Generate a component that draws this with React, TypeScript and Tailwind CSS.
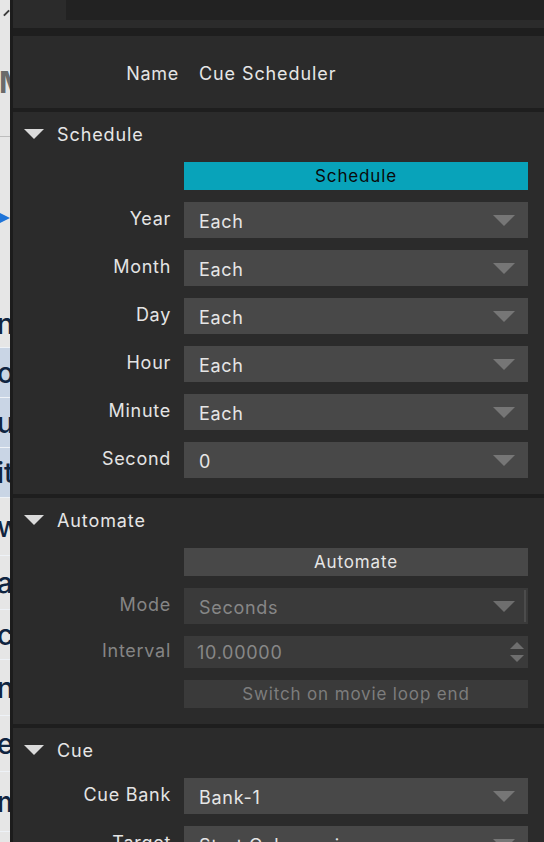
import React from 'react';

// Down-pointing triangle used for dropdown arrows and section toggles
function Tri({ className }: { className: string }) {
    return (
        <svg viewBox="0 0 22 11" className={className}>
            <path d="M0 0 H22 L11 11 Z" fill="currentColor" />
        </svg>
    );
}

function Select({ value, disabled }: { value: string; disabled?: boolean }) {
    return (
        <div className={`h-[36px] flex items-center justify-between pl-[15px] pr-[13px] ${disabled ? 'bg-[#3a3a3a] text-[#878787]' : 'bg-[#484848] text-[#e6e6e6]'}`}>
            <span className="text-[18px] tracking-[0.04em] leading-none pt-[3px]">{value}</span>
            <div className="flex items-center h-full">
                <Tri className={`w-[22px] h-[11px] ${disabled ? 'text-[#6e6e6e]' : 'text-[#767676]'}`} />
                {disabled && <div className="w-[2px] h-[32px] bg-[#4c4c4c] ml-[9px] -mr-[11px]" />}
            </div>
        </div>
    );
}

function Row({ label, children, disabled }: { label: string; children: React.ReactNode; disabled?: boolean }) {
    return (
        <div className="flex items-center">
            <div className={`w-[158px] shrink-0 text-right text-[18px] tracking-[0.04em] leading-none pb-[3px] ${disabled ? 'text-[#858585]' : 'text-[#e4e4e4]'}`}>{label}</div>
            <div className="flex-1 ml-[13px]">{children}</div>
        </div>
    );
}

function SectionHeader({ title }: { title: string }) {
    return (
        <div className="h-[44px] flex items-center pl-[11px]">
            <Tri className="w-[20px] h-[10px] text-[#dadada]" />
            <span className="ml-[13px] text-[18px] tracking-[0.05em] text-[#e6e6e6] leading-none pt-[2px]">{title}</span>
        </div>
    );
}

// Part of the document window that peeks out behind the panel
function BackdropStrip() {
    const letters = [
        { t: 'nc', h: 48, bg: 'bg-[#e6e6e6]' },
        { t: 'o', h: 50, bg: 'bg-[#c9d5e5]' },
        { t: 'u', h: 50, bg: 'bg-[#c9d5e5]' },
        { t: 'it', h: 50, bg: 'bg-[#c9d5e5]' },
        { t: 'w', h: 58, bg: 'bg-[#e6e6e6]' },
        { t: 'a', h: 54, bg: 'bg-[#e6e6e6]' },
        { t: 'ch', h: 50, bg: 'bg-[#e6e6e6]' },
        { t: 'nt', h: 56, bg: 'bg-[#e6e6e6]' },
        { t: 'e', h: 56, bg: 'bg-[#e6e6e6]' },
        { t: 'm', h: 60, bg: 'bg-[#e6e6e6]' },
    ];
    return (
        <div className="w-[10px] shrink-0 overflow-hidden bg-[#e6e6e6] flex flex-col">
            <div className="h-[28px] flex items-center pl-[3px] pb-[2px]">
                <svg viewBox="0 0 8 8" className="w-[8px] h-[8px]">
                    <path d="M1 7 L7 1" stroke="#3a3a3a" strokeWidth="2.2" />
                </svg>
            </div>
            <div className="h-[108px] flex items-center">
                <span className="text-[30px] font-bold text-[#6a6a6a] leading-none -ml-[1px]">M</span>
            </div>
            <div className="h-px bg-[#bdbdbd]" />
            <div className="h-[86px] flex items-end">
                <svg viewBox="0 0 10 10" className="w-[10px] h-[10px]">
                    <path d="M0 0 L10 5 L0 10 Z" fill="#1f74d8" />
                </svg>
            </div>
            <div className="h-[77px]" />
            {letters.map((l, i) => (
                <div key={i} className={`shrink-0 flex items-center border-b border-[#eef2f7] ${l.bg}`} style={{ height: l.h }}>
                    <span className="text-[28px] font-medium text-[#0f2440] leading-none -ml-[3px]">{l.t}</span>
                </div>
            ))}
        </div>
    );
}

export default function App() {
    return (
        <div className="flex w-[544px] h-[842px] overflow-hidden font-['Inter','Liberation_Sans',sans-serif]">
            <BackdropStrip />
            <div className="w-[3px] shrink-0 bg-[#1c1c1c]" />

            <div className="flex-1 flex flex-col bg-[#1e1e1e] gap-[4px] overflow-hidden">
                {/* Top bar */}
                <div className="shrink-0 flex flex-col">
                    <div className="h-[28px] bg-[#2b2b2b] flex">
                        <div className="w-[53px]" />
                        <div className="flex-1 h-[20px] bg-[#222222]" />
                    </div>
                    <div className="h-[4px]" />
                </div>

                {/* Name */}
                <div className="h-[72px] shrink-0 bg-[#2b2b2b] flex items-center pt-[3px]">
                    <div className="w-[166px] text-right text-[18px] tracking-[0.04em] text-[#e4e4e4] leading-none">Name</div>
                    <div className="ml-[20px] text-[18px] tracking-[0.05em] text-[#e6e6e6] leading-none">Cue Scheduler</div>
                </div>

                {/* Schedule */}
                <div className="shrink-0 bg-[#2b2b2b] pb-[16px] pr-[16px]">
                    <SectionHeader title="Schedule" />
                    <div className="mt-[6px] flex flex-col gap-[12px]">
                        <Row label="">
                            <div className="h-[28px] bg-[#08a3ba] flex items-center justify-center text-[17px] tracking-[0.05em] text-[#0a0a0a] leading-none pt-[1px]">Schedule</div>
                        </Row>
                        <Row label="Year"><Select value="Each" /></Row>
                        <Row label="Month"><Select value="Each" /></Row>
                        <Row label="Day"><Select value="Each" /></Row>
                        <Row label="Hour"><Select value="Each" /></Row>
                        <Row label="Minute"><Select value="Each" /></Row>
                        <Row label="Second"><Select value="0" /></Row>
                    </div>
                </div>

                {/* Automate */}
                <div className="shrink-0 bg-[#2b2b2b] pb-[16px] pr-[16px]">
                    <SectionHeader title="Automate" />
                    <div className="mt-[6px] flex flex-col gap-[12px]">
                        <Row label="">
                            <div className="h-[28px] bg-[#484848] flex items-center justify-center text-[17px] tracking-[0.05em] text-[#e6e6e6] leading-none pt-[1px]">Automate</div>
                        </Row>
                        <Row label="Mode" disabled><Select value="Seconds" disabled /></Row>
                        <Row label="Interval" disabled>
                            <div className="h-[32px] bg-[#3a3a3a] flex items-center justify-between pl-[13px] pr-[4px]">
                                <span className="text-[18px] tracking-[0.04em] text-[#878787] leading-none pt-[2px]">10.00000</span>
                                <div className="flex flex-col gap-[6px]">
                                    <svg viewBox="0 0 14 7" className="w-[14px] h-[7px]"><path d="M0 7 L7 0 L14 7 Z" fill="#6e6e6e" /></svg>
                                    <svg viewBox="0 0 14 7" className="w-[14px] h-[7px]"><path d="M0 0 H14 L7 7 Z" fill="#6e6e6e" /></svg>
                                </div>
                            </div>
                        </Row>
                        <Row label="">
                            <div className="h-[28px] bg-[#3a3a3a] flex items-center justify-center text-[17px] tracking-[0.05em] text-[#7d7d7d] leading-none pt-[1px]">Switch on movie loop end</div>
                        </Row>
                    </div>
                </div>

                {/* Cue */}
                <div className="flex-1 bg-[#2b2b2b] pr-[16px]">
                    <SectionHeader title="Cue" />
                    <div className="mt-[6px] flex flex-col gap-[12px]">
                        <Row label="Cue Bank"><Select value="Bank-1" /></Row>
                        <Row label="Target"><Select value="Start Columns in range" /></Row>
                    </div>
                </div>
            </div>
        </div>
    );
}
